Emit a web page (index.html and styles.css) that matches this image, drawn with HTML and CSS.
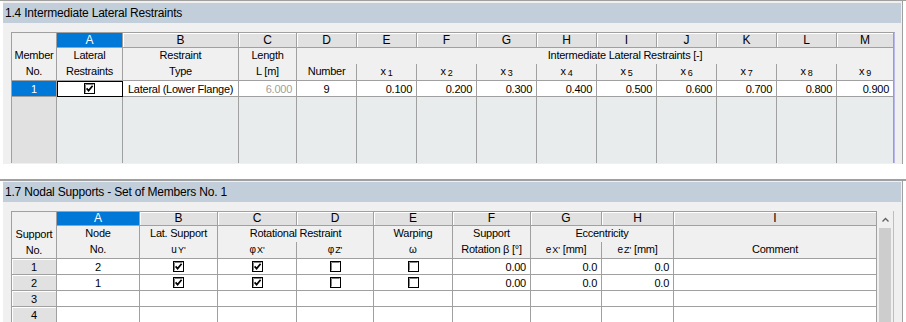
FILE: index.html
```html
<!DOCTYPE html>
<html lang="en">
<head>
  <meta charset="UTF-8" />
  <title>Lateral Restraints / Nodal Supports</title>
  <link rel="stylesheet" href="styles.css">
</head>
<body>
  <!-- 1.4 Intermediate Lateral Restraints -->
  <div class="frame">
    <div class="panel panel-top">
      <div class="title">1.4 Intermediate Lateral Restraints</div>
      <div class="grid-wrap">
        <table class="grid g1">
          <colgroup>
            <col class="w45"><col class="w66"><col class="w116"><col class="w58">
            <col class="w60"><col class="w60"><col class="w60"><col class="w60">
            <col class="w60"><col class="w60"><col class="w60"><col class="w60">
            <col class="w60"><col class="w57">
          </colgroup>
          <tr class="letters">
            <td class="corner" rowspan="3">Member<br>No.</td>
            <td class="sel">A</td><td>B</td><td>C</td><td>D</td><td>E</td><td>F</td>
            <td>G</td><td>H</td><td>I</td><td>J</td><td>K</td><td>L</td><td>M</td>
          </tr>
          <tr class="line1">
            <td>Lateral</td><td>Restraint</td><td>Length</td>
            <td class="open-r"></td>
            <td colspan="9">Intermediate Lateral Restraints [-]</td>
          </tr>
          <tr class="line2">
            <td>Restraints</td><td>Type</td><td>L [m]</td><td>Number</td>
            <td>x<sub>1</sub></td><td>x<sub>2</sub></td><td>x<sub>3</sub></td>
            <td>x<sub>4</sub></td><td>x<sub>5</sub></td><td>x<sub>6</sub></td>
            <td>x<sub>7</sub></td><td>x<sub>8</sub></td><td>x<sub>9</sub></td>
          </tr>
          <tr class="data">
            <td class="rowhead sel">1</td>
            <td class="mid focus"><svg class="cb" width="11" height="11" viewBox="0 0 11 11"><rect x="0.5" y="0.5" width="10" height="10" fill="#fff" stroke="#000"/><path d="M1.5 9.5V1.5H9.5" fill="none" stroke="#808080"/><path d="M2.6 5.4L4.6 7.6L8.6 2.8" fill="none" stroke="#000" stroke-width="1.7"/></svg></td>
            <td class="txt">Lateral (Lower Flange)</td>
            <td class="num dim">6.000</td>
            <td class="mid">9</td>
            <td class="num">0.100</td><td class="num">0.200</td><td class="num">0.300</td>
            <td class="num">0.400</td><td class="num">0.500</td><td class="num">0.600</td>
            <td class="num">0.700</td><td class="num">0.800</td><td class="num">0.900</td>
          </tr>
          <tr class="filler">
            <td class="rowhead-empty"></td>
            <td></td><td></td><td></td><td></td><td></td><td></td><td></td>
            <td></td><td></td><td></td><td></td><td></td><td></td>
          </tr>
        </table>
      </div>
    </div>
  </div>

  <!-- 1.7 Nodal Supports -->
  <div class="frame frame-low">
    <div class="panel">
      <div class="title">1.7 Nodal Supports - Set of Members No. 1</div>
      <div class="grid-wrap">
        <table class="grid g2">
          <colgroup>
            <col class="w45"><col class="w83"><col class="w78"><col class="w79">
            <col class="w77"><col class="w79"><col class="w78"><col class="w71">
            <col class="w72"><col class="w203">
          </colgroup>
          <tr class="letters">
            <td class="corner" rowspan="3">Support<br>No.</td>
            <td class="sel">A</td><td>B</td><td>C</td><td>D</td><td>E</td>
            <td>F</td><td>G</td><td>H</td><td>I</td>
          </tr>
          <tr class="line1">
            <td>Node</td><td>Lat. Support</td>
            <td colspan="2">Rotational Restraint</td>
            <td>Warping</td><td>Support</td>
            <td colspan="2">Eccentricity</td>
            <td></td>
          </tr>
          <tr class="line2">
            <td>No.</td>
            <td><span class="sym">u<i>Y'</i></span></td>
            <td><span class="sym">&phi;<i>X'</i></span></td>
            <td><span class="sym">&phi;<i>Z'</i></span></td>
            <td><span class="sym">&omega;</span></td>
            <td>Rotation &beta; [&deg;]</td>
            <td><span class="sym">e<i>X'</i></span> [mm]</td>
            <td><span class="sym">e<i>Z'</i></span> [mm]</td>
            <td>Comment</td>
          </tr>
          <tr class="data">
            <td class="rowhead">1</td>
            <td class="mid">2</td>
            <td class="mid"><svg class="cb" width="11" height="11" viewBox="0 0 11 11"><rect x="0.5" y="0.5" width="10" height="10" fill="#fff" stroke="#000"/><path d="M1.5 9.5V1.5H9.5" fill="none" stroke="#808080"/><path d="M2.6 5.4L4.6 7.6L8.6 2.8" fill="none" stroke="#000" stroke-width="1.7"/></svg></td>
            <td class="mid"><svg class="cb" width="11" height="11" viewBox="0 0 11 11"><rect x="0.5" y="0.5" width="10" height="10" fill="#fff" stroke="#000"/><path d="M1.5 9.5V1.5H9.5" fill="none" stroke="#808080"/><path d="M2.6 5.4L4.6 7.6L8.6 2.8" fill="none" stroke="#000" stroke-width="1.7"/></svg></td>
            <td class="mid"><svg class="cb" width="11" height="11" viewBox="0 0 11 11"><rect x="0.5" y="0.5" width="10" height="10" fill="#fff" stroke="#000"/><path d="M1.5 9.5V1.5H9.5" fill="none" stroke="#808080"/></svg></td>
            <td class="mid"><svg class="cb" width="11" height="11" viewBox="0 0 11 11"><rect x="0.5" y="0.5" width="10" height="10" fill="#fff" stroke="#000"/><path d="M1.5 9.5V1.5H9.5" fill="none" stroke="#808080"/></svg></td>
            <td class="num">0.00</td>
            <td class="num">0.0</td>
            <td class="num">0.0</td>
            <td></td>
          </tr>
          <tr class="data">
            <td class="rowhead">2</td>
            <td class="mid">1</td>
            <td class="mid"><svg class="cb" width="11" height="11" viewBox="0 0 11 11"><rect x="0.5" y="0.5" width="10" height="10" fill="#fff" stroke="#000"/><path d="M1.5 9.5V1.5H9.5" fill="none" stroke="#808080"/><path d="M2.6 5.4L4.6 7.6L8.6 2.8" fill="none" stroke="#000" stroke-width="1.7"/></svg></td>
            <td class="mid"><svg class="cb" width="11" height="11" viewBox="0 0 11 11"><rect x="0.5" y="0.5" width="10" height="10" fill="#fff" stroke="#000"/><path d="M1.5 9.5V1.5H9.5" fill="none" stroke="#808080"/><path d="M2.6 5.4L4.6 7.6L8.6 2.8" fill="none" stroke="#000" stroke-width="1.7"/></svg></td>
            <td class="mid"><svg class="cb" width="11" height="11" viewBox="0 0 11 11"><rect x="0.5" y="0.5" width="10" height="10" fill="#fff" stroke="#000"/><path d="M1.5 9.5V1.5H9.5" fill="none" stroke="#808080"/></svg></td>
            <td class="mid"><svg class="cb" width="11" height="11" viewBox="0 0 11 11"><rect x="0.5" y="0.5" width="10" height="10" fill="#fff" stroke="#000"/><path d="M1.5 9.5V1.5H9.5" fill="none" stroke="#808080"/></svg></td>
            <td class="num">0.00</td>
            <td class="num">0.0</td>
            <td class="num">0.0</td>
            <td></td>
          </tr>
          <tr class="data">
            <td class="rowhead">3</td>
            <td></td><td></td><td></td><td></td><td></td><td></td><td></td><td></td><td></td>
          </tr>
          <tr class="data">
            <td class="rowhead">4</td>
            <td></td><td></td><td></td><td></td><td></td><td></td><td></td><td></td><td></td>
          </tr>
        </table>
        <div class="vscroll">
          <div class="vscroll-up"><svg width="7" height="5" viewBox="0 0 7 5"><path d="M0.5 4.5L3.5 1.5L6.5 4.5" fill="none" stroke="#606060" stroke-width="1.3"/></svg></div>
          <div class="vscroll-thumb"></div>
        </div>
      </div>
    </div>
  </div>
</body>
</html>
```

FILE: styles.css
```css
html,
body {
  margin: 0;
  padding: 0;
  height: 322px;
  overflow: hidden;
  background-color: #fff;
}
body {
  font-family: "Liberation Sans", Arial, sans-serif;
  font-size: 11px;
  letter-spacing: -0.25px;
  color: #000;
}
/* Rahmen und Panel */
.frame {
  border-top: 1px solid #a0a0a0;
}
.frame-low {
  margin-top: 15px;
  border-top-width: 2px;
}
.panel {
  margin-left: 3px;
  width: 900px;
  box-sizing: border-box;
  padding-top: 1px;
  background-color: #f0f0f0;
  border-right: 1px solid #a0a0a0;
}
.panel-top {
  padding-top: 2px;
  height: 163px;
  overflow: hidden;
}
.title {
  height: 20px;
  line-height: 20px;
  margin-right: 1px;
  padding-left: 2px;
  background-color: #c2cfdb;
  font-size: 12px;
  letter-spacing: -0.2px;
}
.grid-wrap {
  display: flex;
  align-items: stretch;
  margin: 9px 0 0 8px;
}
.panel-top .grid-wrap {
  height: 131px;
}
/* Tabelle */
.grid {
  table-layout: fixed;
  border-collapse: separate;
  border-spacing: 0;
  border-left: 1px solid #a0a0a0;
  border-top: 1px solid #a0a0a0;
  border-right: 1px solid #b8b8ec;
  align-self: flex-start;
}
.g1 { width: 884px; }
.g2 { width: 866px; border-right: none; }
.grid td {
  box-sizing: border-box;
  padding: 0;
  border-right: 1px solid #a0a0a0;
  border-bottom: 1px solid #a0a0a0;
  text-align: center;
  white-space: nowrap;
  overflow: hidden;
  line-height: 14px;
}
.w45 { width: 45px; }
.w57 { width: 57px; }
.w58 { width: 58px; }
.w60 { width: 60px; }
.w66 { width: 66px; }
.w71 { width: 71px; }
.w72 { width: 72px; }
.w77 { width: 77px; }
.w78 { width: 78px; }
.w79 { width: 79px; }
.w83 { width: 83px; }
.w116 { width: 116px; }
.w203 { width: 203px; }

/* Spaltenbuchstaben */
.letters td {
  height: 15px;
  background-color: #e1e1e1;
  box-shadow: inset 1px 1px 0 #fff;
  font-size: 12px;
  letter-spacing: 0;
}
.g2 .letters td {
  height: 14px;
  line-height: 13px;
}
.letters td.sel {
  background-color: #0078d7;
  color: #fff;
  box-shadow: none;
}
.grid td.corner {
  background-color: #f0f0f0;
  box-shadow: none;
  vertical-align: top;
  padding-top: 14px;
  line-height: 16px;
  font-size: 11px;
  letter-spacing: -0.25px;
}
.line1 td {
  height: 16px;
  background-color: #f0f0f0;
  border-bottom: none;
  vertical-align: top;
}
.line2 td {
  height: 17px;
  background-color: #f0f0f0;
  vertical-align: top;
}
.grid td.open-r {
  border-right: none;
}
.line2 sub {
  font-size: 9px;
  vertical-align: -1px;
  margin-left: 2px;
}
.sym {
  font-size: 10px;
  letter-spacing: 0;
}
.sym i {
  font-style: normal;
  font-size: 9px;
  margin-left: 1px;
}
/* Datenzeilen */
.data td {
  height: 16px;
  background-color: #fff;
}
.grid td.num {
  text-align: right;
  padding-right: 4px;
}
.grid td.txt {
  text-align: left;
  padding-left: 5px;
}
.dim {
  color: #a0a0a0;
}
.grid td.focus {
  outline: 1px solid #000;
  outline-offset: -1px;
}
.cb {
  display: block;
  margin: 0 auto;
}
.grid td.rowhead {
  background-color: #e1e1e1;
  box-shadow: inset 1px 1px 0 #fff;
}
.grid td.rowhead.sel {
  background-color: #0078d7;
  color: #fff;
  box-shadow: none;
}
.filler td {
  height: 66px;
  border-bottom: none;
  background-color: #e8eced;
}
.grid td.rowhead-empty {
  background-color: #e1e1e1;
}
/* Scrollleiste */
.vscroll {
  width: 16px;
  height: 120px;
  border-right: 1px solid #b8b8ec;
  background-color: #f0f0f0;
  display: flex;
  flex-direction: column;
}
.vscroll-up {
  height: 17px;
  display: flex;
  align-items: center;
  justify-content: center;
}
.vscroll-thumb {
  flex: 1;
  margin: 0 2px;
  background-color: #cdcdcd;
}
```
